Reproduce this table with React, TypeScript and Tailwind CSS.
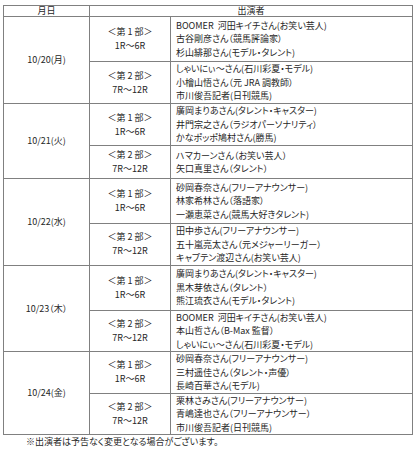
import React from "react";

type Session = { part: string; races: string; h: number; cast: string[] };
type Day = { date: string; sessions: Session[] };

const schedule: Day[] = [
    {
        date: "10/20(月)",
        sessions: [
            { part: "＜第 1 部＞", races: "1R～6R", h: 45, cast: ["BOOMER  河田キイチさん(お笑い芸人)", "古谷剛彦さん（競馬評論家）", "杉山緋那さん(モデル・タレント)"] },
            { part: "＜第 2 部＞", races: "7R～12R", h: 42, cast: ["しゃいにぃ～さん(石川彩夏・モデル)", "小檜山悟さん（元 JRA 調教師）", "市川俊吾記者(日刊競馬)"] },
        ],
    },
    {
        date: "10/21(火)",
        sessions: [
            { part: "＜第 1 部＞", races: "1R～6R", h: 42, cast: ["廣岡まりあさん(タレント・キャスター)", "井門宗之さん（ラジオパーソナリティ）", "かなポッポ鳩村さん(勝馬)"] },
            { part: "＜第 2 部＞", races: "7R～12R", h: 33, cast: ["ハマカーンさん（お笑い芸人）", "矢口真里さん（タレント）"] },
        ],
    },
    {
        date: "10/22(水)",
        sessions: [
            { part: "＜第 1 部＞", races: "1R～6R", h: 45, cast: ["砂岡春奈さん(フリーアナウンサー)", "林家希林さん（落語家）", "一瀬恵菜さん(競馬大好きタレント)"] },
            { part: "＜第 2 部＞", races: "7R～12R", h: 41, cast: ["田中歩さん(フリーアナウンサー)", "五十嵐亮太さん（元メジャーリーガー）", "キャプテン渡辺さん(お笑い芸人)"] },
        ],
    },
    {
        date: "10/23（木）",
        sessions: [
            { part: "＜第 1 部＞", races: "1R～6R", h: 45, cast: ["廣岡まりあさん(タレント・キャスター)", "黒木芽依さん（タレント）", "熊江琉衣さん(モデル・タレント)"] },
            { part: "＜第 2 部＞", races: "7R～12R", h: 40, cast: ["BOOMER  河田キイチさん(お笑い芸人)", "本山哲さん（B-Max 監督）", "しゃいにぃ～さん(石川彩夏・モデル)"] },
        ],
    },
    {
        date: "10/24(金)",
        sessions: [
            { part: "＜第 1 部＞", races: "1R～6R", h: 41, cast: ["砂岡春奈さん(フリーアナウンサー)", "三村遥佳さん（タレント・声優）", "長崎百華さん(モデル)"] },
            { part: "＜第 2 部＞", races: "7R～12R", h: 39, cast: ["栗林さみさん(フリーアナウンサー)", "青嶋達也さん（フリーアナウンサー）", "市川俊吾記者(日刊競馬)"] },
        ],
    },
];

const cell = "border border-[#808080] align-middle p-0";

export default function App() {
    return (
        <div className="w-[416px] h-[450px] bg-white text-[#262626] text-[9px] [font-family:'Noto_Sans_CJK_JP',sans-serif] [font-feature-settings:'palt']">
            <div className="pt-[5px] pl-[3px]">
                <table className="w-[410px] border-collapse table-fixed">
                    <colgroup>
                        <col className="w-[86px]" />
                        <col className="w-[81px]" />
                        <col />
                    </colgroup>
                    <thead>
                        <tr className="h-[11px]">
                            <th className={`${cell} font-normal text-center leading-[10px]`}>月日</th>
                            <th colSpan={2} className={`${cell} font-normal text-center leading-[10px]`}>出演者</th>
                        </tr>
                    </thead>
                    <tbody>
                        {schedule.map((day) =>
                            day.sessions.map((s, i) => (
                                <tr key={day.date + i} style={{ height: s.h }}>
                                    {i === 0 && (
                                        <td rowSpan={day.sessions.length} className={`${cell} text-center`}>
                                            {day.date}
                                        </td>
                                    )}
                                    <td className={`${cell} text-center leading-[14px]`}>
                                        <div className="whitespace-pre">{s.part}</div>
                                        <div>{s.races}</div>
                                    </td>
                                    <td className={`${cell} pl-[5px] leading-[13.5px] whitespace-pre`}>
                                        {s.cast.map((c) => (
                                            <div key={c}>{c}</div>
                                        ))}
                                    </td>
                                </tr>
                            ))
                        )}
                    </tbody>
                </table>
                <p className="mt-[1px] pl-[23px] leading-[12px]">※出演者は予告なく変更となる場合がございます。</p>
            </div>
        </div>
    );
}
